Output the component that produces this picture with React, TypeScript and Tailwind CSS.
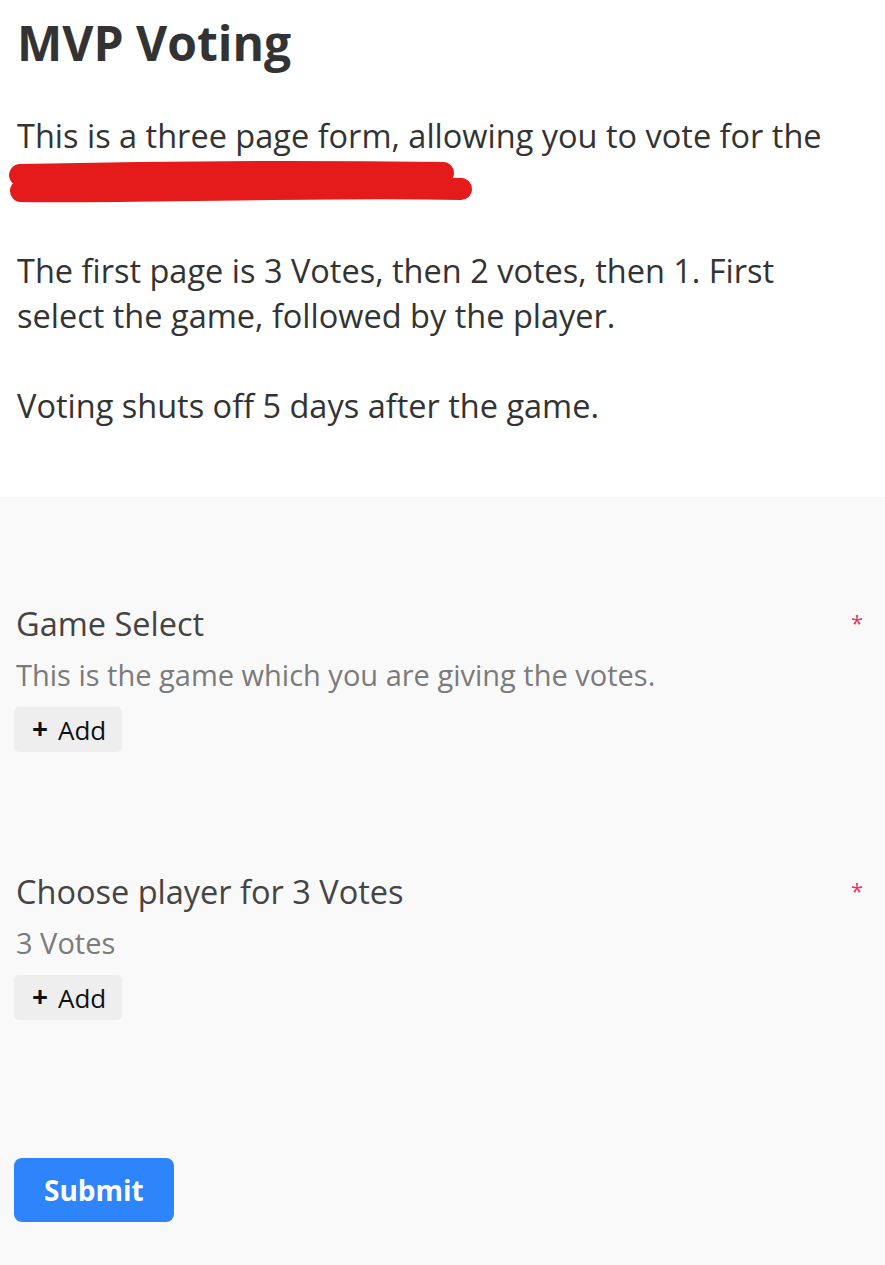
import React from "react";

function Scribble() {
  return (
    <svg
      className="absolute left-0 top-0 pointer-events-none"
      width="885"
      height="497"
      viewBox="0 0 885 497"
      fill="none"
    >
      <path d="M20 175 C 150 172, 300 171, 443 173" stroke="#e51b1b" strokeWidth="22" strokeLinecap="round" />
      <path d="M21 191 C 160 193, 300 186, 461 189" stroke="#e51b1b" strokeWidth="22" strokeLinecap="round" />
    </svg>
  );
}

function Field({ label, desc }: { label: string; desc: string }) {
  return (
    <div className="flex flex-col">
      <div className="flex items-start justify-between pr-[6px]">
        <div className="text-[32.5px] leading-[44px] text-[#444444]">{label}</div>
        <div className="text-[22px] leading-[28px] text-[#e8336b] mt-[6px]">*</div>
      </div>
      <div className="mt-[11px] text-[29px] leading-[36px] text-[#7b7b7b]">{desc}</div>
      <div className="mt-[14px] -ml-[2px]">
        <button className="flex items-center gap-[10px] h-[45px] pl-[18px] pr-[16px] rounded-[5px] bg-[#eeeeee] text-[26px] text-[#111111]">
          <span className="font-bold text-[28px] leading-none -mt-[3px]">+</span>
          <span className="leading-none">Add</span>
        </button>
      </div>
    </div>
  );
}

export default function App() {
  return (
    <div
      className="relative w-[885px] min-h-[1265px] bg-[#f9f9f9]"
      style={{ fontFamily: '"Open Sans", "Noto Sans", sans-serif' }}
    >
      <div className="relative bg-white pl-[17px] pt-[8px] h-[497px]">
        <h1 className="text-[48px] leading-[70px] font-bold text-[#333333]">MVP Voting</h1>
        <div className="mt-[35px] w-[820px] text-[32.5px] leading-[45px] text-[#333333]">
          <p>This is a three page form, allowing you to vote for the</p>
          <p>&nbsp;</p>
          <p>&nbsp;</p>
          <p>The first page is 3 Votes, then 2 votes, then 1. First select the game, followed by the player.</p>
          <p>&nbsp;</p>
          <p>Voting shuts off 5 days after the game.</p>
        </div>
        <Scribble />
      </div>
      <div className="px-[16px] pt-[105px]">
        <Field label="Game Select" desc="This is the game which you are giving the votes." />
        <div className="h-[118px]" />
        <Field label="Choose player for 3 Votes" desc="3 Votes" />
        <div className="mt-[138px]">
          <button className="h-[64px] px-[30px] rounded-[8px] bg-[#2d84fb] text-white font-bold text-[28px] -ml-[2px]">
            Submit
          </button>
        </div>
      </div>
    </div>
  );
}
